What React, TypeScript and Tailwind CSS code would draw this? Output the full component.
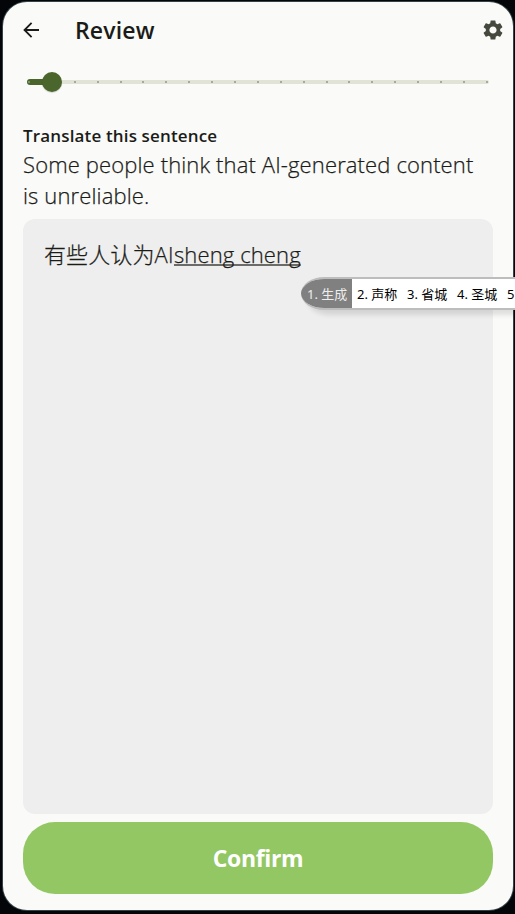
import { MdSettings } from "react-icons/md";

const STEPS = 20;
const CANDIDATES = ["声称", "省城", "圣城"];

function Header() {
  return (
    <header className="flex h-[58px] items-center pl-5 pr-2 text-[#1b1c18]">
      <button className="flex w-[52px] shrink-0" aria-label="Back">
        <svg viewBox="0 0 18 18" className="h-[18px] w-[18px]" fill="none" stroke="currentColor" strokeWidth="1.8">
          <path d="M16 9H1.7M8.6 1.9L1.5 9L8.6 16.1" />
        </svg>
      </button>
      <h1 className="flex-1 whitespace-nowrap text-[23px] font-semibold leading-[30px] tracking-[0.15px]">Review</h1>
      <button className="text-[#44483d]" aria-label="Settings">
        <MdSettings size={24} />
      </button>
    </header>
  );
}

function ProgressSlider() {
  return (
    <div className="relative ml-6 mt-[13px] flex h-5 w-[462px] items-center">
      <div className="flex h-1 w-full items-center justify-between rounded-sm bg-[#e0e3d5] px-px">
        {Array.from({ length: STEPS + 1 }, (_, i) => (
          <span key={i} className="h-0.5 w-0.5 bg-[#a6aa9b]" />
        ))}
      </div>
      <div className="absolute left-0 top-[7px] flex h-1.5 w-[25px] items-center rounded-full bg-[#4a662c] pl-px">
        <span className="h-0.5 w-0.5 bg-[#7c9461]" />
      </div>
      <div className="absolute left-[15px] top-0 h-5 w-5 rounded-full bg-[#4a662c] shadow-[0_1px_1px_rgba(0,0,0,0.15)]" />
    </div>
  );
}

function CandidateBar() {
  return (
    <div className="absolute left-[301px] top-[277px] flex h-[33px] w-[260px] overflow-hidden border-y-2 border-[#bdbdbd] bg-white font-['Noto_Sans','Noto_Sans_CJK_SC',sans-serif] text-[13px] leading-[30px] text-black shadow-[6px_5px_5px_rgba(0,0,0,0.11)] [border-bottom-left-radius:24px_17px] [border-top-left-radius:24px_17px]">
      <span className="w-[51px] shrink-0 whitespace-nowrap bg-[#808080] pl-1.5 text-[#eeeeee]">1. 生成</span>
      {CANDIDATES.map((word, i) => (
        <span key={word} className="w-[50px] shrink-0 whitespace-nowrap pl-[5px]">
          {i + 2}. {word}
        </span>
      ))}
      <span className="shrink-0 pl-[5px]">5</span>
    </div>
  );
}

export default function App() {
  return (
    <div className="relative h-[914px] w-[515px] overflow-hidden bg-[#030508] pl-[3px] pt-0.5 font-['Open_Sans','Noto_Sans_CJK_SC',sans-serif] text-[#1b1c18]">
      <main className="flex h-[908px] w-[510px] flex-col rounded-[24px] bg-[#fafaf8] shadow-[0_0_0_1px_#344348]">
        <div className="-mt-px">
          <Header />
        </div>
        <ProgressSlider />
        <section className="ml-5 mt-[31px] h-24 w-[470px] shrink-0">
          <h2 className="whitespace-nowrap text-[17px] font-semibold leading-[26px] tracking-[0.15px]">
            Translate this sentence
          </h2>
          <p className="whitespace-nowrap text-[22px] font-light leading-[31px] tracking-[0.13px] [-webkit-text-stroke:0.25px_#1b1c18]">
            Some people think that AI-generated content
            <br />
            is unreliable.
          </p>
        </section>
        <section className="ml-5 h-[595px] w-[470px] shrink-0 rounded-[12px] bg-[#eeeeee] pl-[21px] pt-[19px] text-[22px] font-light leading-8 tracking-[0.12px] [-webkit-text-stroke:0.25px_#1b1c18]">
          有些人认为<span className="tracking-[0.3px]">AI</span>
          <span className="underline decoration-[#6b6b67] decoration-2 underline-offset-[1px] [text-decoration-skip-ink:none]">
            sheng cheng
          </span>
        </section>
        <button className="ml-5 mt-2 h-[72px] w-[470px] shrink-0 rounded-[32px] bg-[#93c763] text-[23px] font-bold tracking-[-0.35px] text-white">
          Confirm
        </button>
      </main>
      <CandidateBar />
    </div>
  );
}
